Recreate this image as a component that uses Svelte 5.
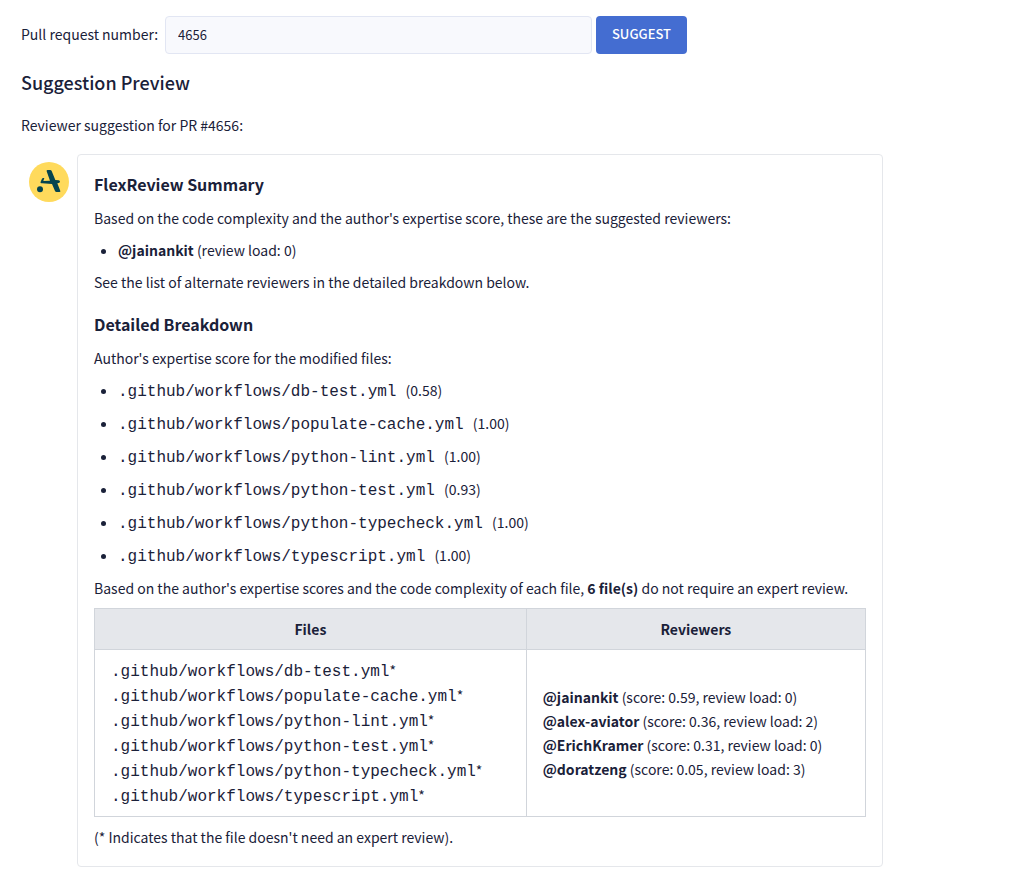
<script>
  let prNumber = $state('4656');
  let submitted = $state('4656');

  const files = [
    { path: '.github/workflows/db-test.yml', score: '0.58' },
    { path: '.github/workflows/populate-cache.yml', score: '1.00' },
    { path: '.github/workflows/python-lint.yml', score: '1.00' },
    { path: '.github/workflows/python-test.yml', score: '0.93' },
    { path: '.github/workflows/python-typecheck.yml', score: '1.00' },
    { path: '.github/workflows/typescript.yml', score: '1.00' }
  ];

  const reviewers = [
    { name: '@jainankit', score: '0.59', load: 0 },
    { name: '@alex-aviator', score: '0.36', load: 2 },
    { name: '@ErichKramer', score: '0.31', load: 0 },
    { name: '@doratzeng', score: '0.05', load: 3 }
  ];

  function suggest(event) {
    event.preventDefault();
    submitted = prNumber;
  }
</script>

<main>
  <form onsubmit={suggest}>
    <label for="pr-number">Pull request number:</label>
    <input id="pr-number" type="text" bind:value={prNumber} />
    <button type="submit">SUGGEST</button>
  </form>

  <h2>Suggestion Preview</h2>
  <p class="intro">Reviewer suggestion for PR #{submitted}:</p>

  <div class="comment">
    <svg class="avatar" viewBox="0 0 120 120" aria-hidden="true">
      <circle cx="60" cy="60" r="60" fill="#ffda5c" />
      <g fill="#04444f">
        <path d="M53 28q-1-4 3-4h7q4 0 5 3l11 27 10 1q4 1 4 4t-4 4l-4 1 9 23q1 3-3 3h-8q-4 0-5-3l-9-21-29-2q-7 0-5-5l4-9q1-2 4-2h3l-3 9 20-1z" />
        <circle cx="33" cy="82" r="9" />
      </g>
    </svg>

    <article>
      <h3>FlexReview Summary</h3>
      <p>Based on the code complexity and the author's expertise score, these are the suggested reviewers:</p>
      <ul>
        <li><strong>@jainankit</strong> (review load: 0)</li>
      </ul>
      <p>See the list of alternate reviewers in the detailed breakdown below.</p>

      <h3 class="second">Detailed Breakdown</h3>
      <p>Author's expertise score for the modified files:</p>
      <ul class="files">
        {#each files as file}
          <li><code>{file.path}</code> ({file.score})</li>
        {/each}
      </ul>
      <p>Based on the author's expertise scores and the code complexity of each file, <strong>6 file(s)</strong> do not require an expert review.</p>

      <table>
        <thead>
          <tr><th class="wide">Files</th><th>Reviewers</th></tr>
        </thead>
        <tbody>
          <tr>
            <td>
              {#each files as file}
                <div class="file"><code>{file.path}</code>*</div>
              {/each}
            </td>
            <td>
              {#each reviewers as person}
                <div><strong>{person.name}</strong> (score: {person.score}, review load: {person.load})</div>
              {/each}
            </td>
          </tr>
        </tbody>
      </table>
      <p>(* Indicates that the file doesn't need an expert review).</p>
    </article>
  </div>
</main>

<style>
  :global(body) {
    margin: 0;
    background: #fff;
  }

  main {
    padding: 16px 21px 24px;
    color: #1a2139;
    font-family: "Noto Sans CJK SC", "Noto Sans", sans-serif;
    font-size: 14px;
    line-height: 24px;
  }

  form {
    display: flex;
    align-items: center;
    gap: 4px;
    max-width: 666px;
  }

  label {
    flex: 0 0 140px;
    padding-bottom: 2px;
  }

  input {
    flex: 1;
    min-width: 0;
    box-sizing: border-box;
    height: 38px;
    padding: 0 12px 2px;
    border: 1px solid #e2e6f3;
    border-radius: 4px;
    background: #f8f9fd;
    color: inherit;
    font: inherit;
    font-size: 13px;
  }

  button {
    height: 38px;
    padding: 0 16px 2px;
    border: 0;
    border-radius: 4px;
    background: #446dd1;
    color: #fff;
    font: inherit;
    font-size: 13px;
    font-weight: 500;
  }

  h2 {
    margin: 14px 0 17px;
    font-size: 18px;
    font-weight: 500;
    line-height: 28px;
  }

  h3 {
    margin: 0 0 8px;
    font-size: 16px;
    font-weight: 700;
    line-height: 28px;
  }

  h3.second {
    margin-top: 16px;
  }

  p {
    margin: 0 0 8px;
  }

  .intro {
    margin-bottom: 17px;
  }

  .comment {
    display: flex;
    align-items: flex-start;
    gap: 8px;
    padding-left: 8px;
  }

  .avatar {
    flex: none;
    width: 40px;
    height: 40px;
    margin-top: 8px;
  }

  article {
    box-sizing: border-box;
    max-width: 806px;
    flex: 1;
    min-width: 0;
    padding: 15px 16px 17px;
    border: 1px solid #e5e7eb;
    border-radius: 4px;
  }

  article > p:last-child {
    margin-bottom: 0;
  }

  ul {
    margin: 0 0 8px;
    padding-left: 24px;
  }

  .files {
    display: grid;
    gap: 8px;
  }

  .files li,
  .file {
    line-height: 25px;
  }

  .files code {
    padding-right: 6px;
  }

  code {
    font-family: "Liberation Mono", monospace;
    font-size: 16px;
    line-height: 16px;
  }

  table {
    width: 100%;
    margin-bottom: 8px;
    border-collapse: collapse;
  }

  th,
  td {
    padding: 8px 16px;
    border: 1px solid #d1d5db;
  }

  th {
    background: #e5e7eb;
    font-weight: 700;
  }

  .wide {
    width: 56%;
    box-sizing: border-box;
  }
</style>
